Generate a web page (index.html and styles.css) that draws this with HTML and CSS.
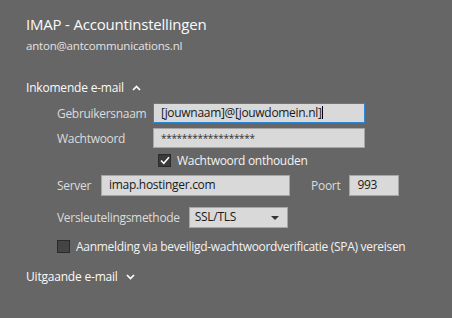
FILE: index.html
```html
<!DOCTYPE html>
<html lang="nl">
<head>
  <meta charset="UTF-8" />
  <title>IMAP - Accountinstellingen</title>
  <link rel="stylesheet" href="styles.css">
</head>
<body>
<div class="panel">
  <h1 class="title">IMAP - Accountinstellingen</h1>
  <div class="account">anton@antcommunications.nl</div>

  <div class="section">
    <span>Inkomende e-mail</span>
    <svg class="chev" width="9" height="6" viewBox="0 0 9 6"><path d="M1 5 L4.5 1.5 L8 5" fill="none" stroke="#fff" stroke-width="1.7"/></svg>
  </div>

  <div class="fields">
    <div class="row">
      <label class="lbl wide">Gebruikersnaam</label>
      <div class="box long focus">[jouwnaam]@[jouwdomein.nl]<span class="caret"></span></div>
    </div>
    <div class="row">
      <label class="lbl wide">Wachtwoord</label>
      <div class="box long stars">******************</div>
    </div>
    <div class="row check-row indent">
      <span class="check on"><svg width="10" height="9" viewBox="0 0 10 9"><path d="M1 4.5 L3.8 7.3 L9 1.2" fill="none" stroke="#fff" stroke-width="1.5"/></svg></span>
      <span class="txt">Wachtwoord onthouden</span>
    </div>
    <div class="row server-row">
      <label class="lbl">Server</label>
      <div class="box server">imap.hostinger.com</div>
      <label class="lbl port-lbl">Poort</label>
      <div class="box port">993</div>
    </div>
    <div class="row enc-row">
      <label class="lbl">Versleutelingsmethode</label>
      <div class="box select">SSL/TLS<span class="arrow"></span></div>
    </div>
    <div class="row check-row spa">
      <span class="check"></span>
      <span class="txt">Aanmelding via beveiligd-wachtwoordverificatie (SPA) vereisen</span>
    </div>
  </div>

  <div class="section out">
    <span>Uitgaande e-mail</span>
    <svg class="chev" width="9" height="6" viewBox="0 0 9 6"><path d="M1 1 L4.5 4.5 L8 1" fill="none" stroke="#fff" stroke-width="1.7"/></svg>
  </div>
</div>
</body>
</html>
```

FILE: styles.css
```css
html, body {
  margin: 0;
  background: #666666;
}
body {
  font-family: "Open Sans", "Noto Sans", sans-serif;
  color: #e6e6e6;
  width: 452px;
  height: 318px;
  overflow: hidden;
}
.panel {
  padding: 13px 0 0 26px;
}
.title {
  font-size: 15px;
  font-weight: normal;
  color: #fafafa;
  margin: 0;
  line-height: 22px;
  letter-spacing: -0.2px;
}
.account {
  font-size: 11.5px;
  line-height: 16px;
  margin-top: 3px;
  color: #e3e3e3;
  letter-spacing: -0.2px;
}
.section {
  display: flex;
  align-items: center;
  gap: 8px;
  margin-top: 26px;
  font-size: 12px;
  line-height: 16px;
  color: #fafafa;
  letter-spacing: -0.2px;
}
.section.out {
  margin-top: 16px;
}
.fields {
  padding-left: 31px;
  margin-top: 7px;
}
.row {
  display: flex;
  align-items: center;
  height: 20px;
  margin-bottom: 5px;
  font-size: 12px;
  letter-spacing: -0.3px;
}
.lbl {
  color: #dcdcdc;
}
.lbl.wide {
  width: 96px;
}
.box {
  box-sizing: border-box;
  height: 20px;
  background: #d9d9d9;
  border: 1px solid #a6a6a6;
  color: #1a1a1a;
  font-size: 12px;
  line-height: 18px;
  padding: 0 7px;
  white-space: nowrap;
}
.box.long {
  width: 212px;
}
.box.focus {
  border-color: #2b88d8;
}
.caret {
  display: inline-block;
  width: 1px;
  height: 13px;
  background: #000;
  vertical-align: -2px;
}
.stars {
  font-size: 10px;
  color: #333;
}
.check-row {
  height: 14px;
  margin-bottom: 8px;
}
.check-row.indent {
  padding-left: 101px;
}
.check {
  box-sizing: border-box;
  width: 13px;
  height: 13px;
  border: 1px solid #2a2a2a;
  background: #444;
  display: flex;
  align-items: center;
  justify-content: center;
  margin-right: 6px;
}
.check.on {
  background: #3a3a3a;
}
.check-row .txt {
  color: #f2f2f2;
}
.server-row {
  height: 21px;
  margin-bottom: 11px;
}
.box.server {
  width: 189px;
  margin-left: 10px;
  height: 21px;
}
.port-lbl {
  margin-left: 21px;
  margin-right: 9px;
}
.box.port {
  width: 50px;
  height: 21px;
}
.enc-row {
  height: 21px;
  margin-bottom: 11px;
}
.box.select {
  width: 99px;
  height: 21px;
  margin-left: 9px;
  position: relative;
  padding-left: 5px;
}
.arrow {
  position: absolute;
  right: 8px;
  top: 8px;
  border-left: 4px solid transparent;
  border-right: 4px solid transparent;
  border-top: 4px solid #333;
}
.spa {
  margin-bottom: 0;
}
```
